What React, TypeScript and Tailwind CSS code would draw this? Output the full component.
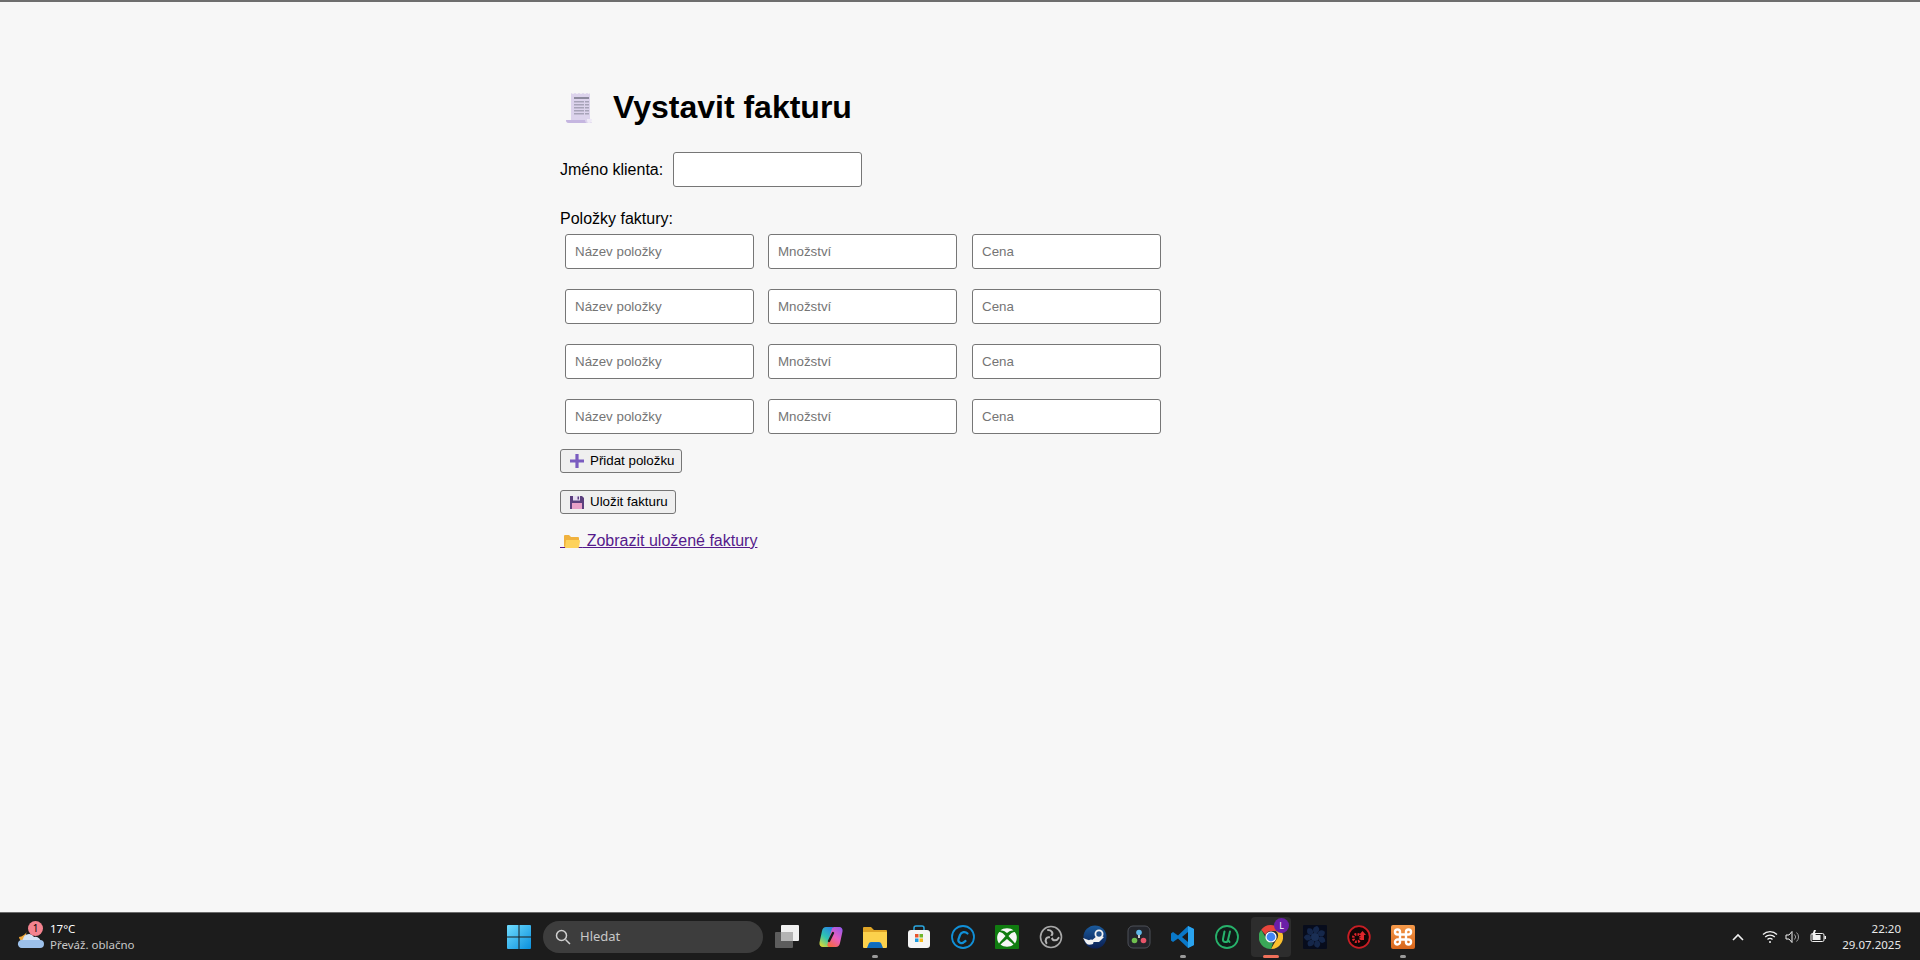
import type { ReactNode } from 'react'

const ReceiptIcon = () => (
  <svg width="32" height="32" viewBox="0 0 32 32" className="shrink-0">
    <path d="M6 1l2 1 2-1 2 1 2-1 2 1 2-1 2 1 2-1 2 1 1-1v25c0 2 1 4 2 5H4c-2 0-3-1-3-3h5z" fill="#dcd3ec" />
    <path d="M1 28h19c0 2 1 3 2 3H4c-2 0-3-1-3-3z" fill="#c5b6e0" />
    <path d="M22 27h5c0 2-1 4-3 4s-2-2-2-4z" fill="#efeaf7" />
    <rect x="9" y="5" width="15" height="2" fill="#8d8a9e" />
    <g fill="#a7a3b8">
      <rect x="9" y="9" width="10" height="1.5" />
      <rect x="20" y="9" width="4" height="1.5" />
      <rect x="9" y="12" width="10" height="1.5" />
      <rect x="20" y="12" width="4" height="1.5" />
      <rect x="9" y="15" width="10" height="1.5" />
      <rect x="20" y="15" width="4" height="1.5" />
      <rect x="9" y="18" width="10" height="1.5" />
      <rect x="20" y="18" width="4" height="1.5" />
      <rect x="9" y="21" width="10" height="1.5" />
      <rect x="20" y="21" width="4" height="1.5" />
    </g>
  </svg>
)

const PlusIcon = () => (
  <svg width="14" height="14" viewBox="0 0 14 14" className="shrink-0">
    <path d="M5.400 0h3.200v5.400H14v3.200H8.600V14H5.400V8.600H0V5.400h5.400z" fill="#7a5cc0" />
  </svg>
)

const SaveIcon = () => (
  <svg width="14" height="14" viewBox="0 0 14 14" className="shrink-0">
    <path d="M0 1h12l2 2v11H0z" fill="#5b3f7e" />
    <rect x="3" y="1" width="7" height="4.500" fill="#e8dff2" />
    <rect x="7.500" y="1.500" width="1.500" height="3" fill="#5b3f7e" />
    <rect x="2" y="8" width="10" height="6" fill="#e8a0c8" />
  </svg>
)

// the emoji sits over non-breaking spaces so the link underline runs under it
const FolderIcon = () => (
  <span className="relative">
    {'\u00a0\u00a0\u00a0\u00a0\u00a0'}
    <svg width="16" height="15" viewBox="0 0 16 15" className="absolute left-[4px] top-[2px]">
      <path d="M0 2a1 1 0 0 1 1-1h4l2 2h7a1 1 0 0 1 1 1v9H1a1 1 0 0 1-1-1z" fill="#f0b23e" />
      <path d="M2 6h13a1 1 0 0 1 1 1l-1 6a1 1 0 0 1-1 1H1z" fill="#fdd25c" />
    </svg>
  </span>
)

const Field = ({ placeholder }: { placeholder: string }) => (
  <input
    placeholder={placeholder}
    className="w-[189px] h-[35px] bg-white border border-[#767676] rounded-[3px] px-[9px] text-[13.33px] placeholder:text-[#757575] outline-none"
  />
)

const Action = ({ icon, children }: { icon: ReactNode; children: ReactNode }) => (
  <button className="h-6 flex items-center gap-[6px] pl-[9px] pr-[7px] bg-[#efefef] border border-[#767676] rounded-[3px] text-[13.33px] text-black">
    {icon}
    {children}
  </button>
)

const WeatherIcon = () => (
  <div className="relative w-[30px] h-[30px]">
    <svg width="30" height="30" viewBox="0 0 30 30">
      <path d="M12 8a9 9 0 0 0 0 11l-6 1c-2-2-3-4-3-5 3 0 7-3 9-7z" fill="#f2a93b" />
      <path d="M7 17a6 6 0 0 1 11-2 5 5 0 0 1 6 7H7a3.500 3.500 0 0 1 0-5z" fill="#d4e4f7" />
      <path d="M2 21a4 4 0 0 1 5-3h17a4 4 0 0 1 0 8H6a4 4 0 0 1-4-5z" fill="#9cc0ea" />
    </svg>
    <span className="absolute left-[12px] top-[-1px] w-[15px] h-[15px] rounded-full bg-[#f4838f] text-[10px] leading-[15px] text-center text-black">1</span>
  </div>
)

const StartIcon = () => (
  <svg width="24" height="24" viewBox="0 0 24 24">
    <defs>
      <linearGradient id="win" x1="0" y1="0" x2="1" y2="1">
        <stop offset="0" stopColor="#6fdcff" />
        <stop offset="1" stopColor="#0a8fdc" />
      </linearGradient>
    </defs>
    <path d="M0 1a1 1 0 0 1 1-1h10.500v11.500H0zM12.500 0H23a1 1 0 0 1 1 1v10.500H12.500zM0 12.500h11.500V24H1a1 1 0 0 1-1-1zM12.500 12.500H24V23a1 1 0 0 1-1 1H12.500z" fill="url(#win)" />
  </svg>
)

const TaskViewIcon = () => (
  <svg width="24" height="24" viewBox="0 0 24 24">
    <rect x="0" y="7" width="18" height="16" rx="1" fill="#5d5d5d" />
    <rect x="6" y="0" width="18" height="16" rx="1" fill="#f0f0f0" />
    <rect x="6" y="7" width="12" height="9" fill="#b4b4b4" />
  </svg>
)

const CopilotIcon = () => (
  <svg width="24" height="24" viewBox="0 0 24 24">
    <defs>
      <linearGradient id="copL" x1="0.800" y1="0" x2="0.200" y2="1">
        <stop offset="0" stopColor="#2a7fe8" />
        <stop offset="0.550" stopColor="#2ec4b0" />
        <stop offset="1" stopColor="#d8d838" />
      </linearGradient>
      <linearGradient id="copR" x1="0.800" y1="0" x2="0.200" y2="1">
        <stop offset="0" stopColor="#9a5ae8" />
        <stop offset="0.500" stopColor="#ea5fc0" />
        <stop offset="1" stopColor="#f5693b" />
      </linearGradient>
    </defs>
    <path d="M7 2h6c1.500 0 2.500.8 2.800 1.800L11 20.500C10.500 21.500 9.500 22 8 22H4c-2.500 0-4-2-3.500-4.500L3 6c.5-2.500 2-4 4-4z" fill="url(#copL)" />
    <path d="M17 22h-6c-1.500 0-2.500-.8-2.800-1.800L13 3.500C13.500 2.500 14.500 2 16 2h4c2.500 0 4 2 3.500 4.500L21 18c-.5 2.500-2 4-4 4z" fill="url(#copR)" />
    <path d="M14 8l-4 8" stroke="#1c1c1c" strokeWidth="2.400" strokeLinecap="round" />
  </svg>
)

const ExplorerIcon = () => (
  <svg width="24" height="24" viewBox="0 0 24 24">
    <path d="M0 3a1 1 0 0 1 1-1h7l3 3h12a1 1 0 0 1 1 1v3H0z" fill="#e0a526" />
    <path d="M0 7h24v15a1 1 0 0 1-1 1H1a1 1 0 0 1-1-1z" fill="#fcd14c" />
    <path d="M6 19a2 2 0 0 1 2-2h8a2 2 0 0 1 2 2v4H6z" fill="#1473c9" />
    <path d="M4 23l2-5h12l2 5z" fill="#0f6cbd" />
  </svg>
)

const StoreIcon = () => (
  <svg width="24" height="24" viewBox="0 0 24 24">
    <path d="M7 6V3a2 2 0 0 1 2-2h6a2 2 0 0 1 2 2v3" fill="none" stroke="#2aa7e0" strokeWidth="1.500" />
    <rect x="1" y="5" width="22" height="18" rx="3" fill="#f5f5f5" />
    <rect x="8" y="9" width="3.500" height="3.500" fill="#e8552c" />
    <rect x="12.500" y="9" width="3.500" height="3.500" fill="#6fb52c" />
    <rect x="8" y="13.500" width="3.500" height="3.500" fill="#1c9be0" />
    <rect x="12.500" y="13.500" width="3.500" height="3.500" fill="#f5b81c" />
  </svg>
)

const CCleanerIcon = () => (
  <svg width="24" height="24" viewBox="0 0 24 24">
    <circle cx="12" cy="12" r="11" fill="none" stroke="#1190d8" strokeWidth="1.800" />
    <path d="M16.500 8.500A4.500 4.500 0 0 0 9 10l-1.500 4a3.200 3.200 0 0 0 5.500 3l1.500-1" fill="none" stroke="#1190d8" strokeWidth="2.200" strokeLinecap="round" />
  </svg>
)

const XboxIcon = () => (
  <svg width="24" height="24" viewBox="0 0 24 24">
    <rect width="24" height="24" rx="1" fill="#107c10" />
    <g fill="#f6f6f6">
      <path d="M5.500 5.500C8 2.500 16 2.500 18.500 5.500C16 5 13.500 6.500 12 8C10.500 6.500 8 5 5.500 5.500z" />
      <path d="M4.300 7C6 6.500 9 9 10.500 11C8 14 5 17 4 18.500C1.500 15 1.500 10 4.300 7z" />
      <path d="M19.700 7C18 6.500 15 9 13.500 11C16 14 19 17 20 18.500C22.500 15 22.500 10 19.700 7z" />
      <path d="M12 14C14.500 16 18 19 18.500 19.500C15 22.500 9 22.500 5.500 19.500C6 19 9.500 16 12 14z" />
    </g>
  </svg>
)

const ObsIcon = () => (
  <svg width="24" height="24" viewBox="0 0 24 24">
    <circle cx="12" cy="12" r="10.500" fill="#1f1f1f" stroke="#a8a8a8" strokeWidth="1.600" />
    {[0, 120, 240].map((angle) => (
      <g key={angle} transform={`rotate(${angle} 12 12)`}>
        <path d="M12.500 10.500C14.500 8.500 13 5 9 5" fill="none" stroke="#b4b4b4" strokeWidth="2" strokeLinecap="round" />
      </g>
    ))}
    <circle cx="12" cy="12" r="1.200" fill="#1f1f1f" />
  </svg>
)

const SteamIcon = () => (
  <svg width="24" height="24" viewBox="0 0 24 24">
    <defs>
      <linearGradient id="steam" x1="0" y1="0" x2="0" y2="1">
        <stop offset="0" stopColor="#1a5a9c" />
        <stop offset="1" stopColor="#0b1f52" />
      </linearGradient>
    </defs>
    <circle cx="12" cy="12" r="11.500" fill="url(#steam)" />
    <path d="M0 13l8 3 6-5 1-1 6 2-5 5-6 0a4 4 0 0 1-7 1z" fill="#f2f2f2" />
    <circle cx="16" cy="9" r="4.500" fill="#f2f2f2" />
    <circle cx="16" cy="9" r="2.700" fill="#1f4f8a" />
    <circle cx="8" cy="17" r="2.500" fill="#f2f2f2" />
  </svg>
)

const ResolveIcon = () => (
  <svg width="24" height="24" viewBox="0 0 24 24">
    <rect x="1" y="1" width="22" height="22" rx="5" fill="#23252b" stroke="#4d5058" strokeWidth="1" />
    <circle cx="12" cy="7.500" r="2.800" fill="#5fb7e8" />
    <circle cx="7.500" cy="15.500" r="2.800" fill="#6fc04f" />
    <circle cx="16.500" cy="15.500" r="2.800" fill="#e8556a" />
    <path d="M12 10v3" stroke="#c8c8c8" strokeWidth="2" />
  </svg>
)

const VsCodeIcon = () => (
  <svg width="24" height="24" viewBox="0 0 24 24">
    <path d="M17 1l6 3v16l-6 3-10-9.500L2 17l-2-1.500v-7L2 7l5 3.500z" fill="#0a78c8" />
    <path d="M17 1l6 3v16l-6 3z" fill="#2aa3ee" />
    <path d="M17 7l-6 5 6 5z" fill="#1c1c1c" />
  </svg>
)

const IdmIcon = () => (
  <svg width="24" height="24" viewBox="0 0 24 24">
    <circle cx="12" cy="12" r="11" fill="#101c18" stroke="#27b26b" strokeWidth="1.800" />
    <path d="M9.500 6.500L8 14a2.500 2.500 0 0 0 5 1l2-8.500M13.500 15.500l1 1.500" fill="none" stroke="#27b26b" strokeWidth="2" strokeLinecap="round" />
  </svg>
)

const ChromeIcon = () => (
  <svg width="24" height="24" viewBox="0 0 24 24">
    <path d="M12 0a12 12 0 0 1 10.400 6H12a6 6 0 0 0-5.600 3.800L2.200 4.700A12 12 0 0 1 12 0z" fill="#e8453c" />
    <path d="M22.400 6A12 12 0 0 1 12 24l5.200-9A6 6 0 0 0 17 6z" fill="#fbc02d" />
    <path d="M2.200 4.700L7 13a6 6 0 0 0 7 4.800L12 24A12 12 0 0 1 2.200 4.700z" fill="#3aa757" />
    <circle cx="12" cy="12" r="5.600" fill="#fff" />
    <circle cx="12" cy="12" r="4.400" fill="#4285f4" />
  </svg>
)

const FanIcon = () => (
  <svg width="24" height="24" viewBox="0 0 24 24">
    <rect width="24" height="24" rx="1" fill="#070c1c" />
    {[0, 51, 103, 154, 206, 257, 309].map((angle) => (
      <path key={angle} transform={`rotate(${angle} 12 12)`} d="M11 8c-2-3-1-6 3-7 3 2 3 5 0 7z" fill="#15274a" />
    ))}
    <circle cx="12" cy="12" r="4" fill="#1a2f55" />
  </svg>
)

const RedIcon = () => (
  <svg width="24" height="24" viewBox="0 0 24 24">
    <circle cx="12" cy="12" r="10.800" fill="#120505" stroke="#c81e24" strokeWidth="1.800" />
    <circle cx="10" cy="13" r="3.800" fill="none" stroke="#e0262c" strokeWidth="2.600" strokeDasharray="1.800 1.200" />
    <path d="M15.500 6l3.500 4h-2v5h-3v-5h-2z" fill="#e0262c" />
  </svg>
)

const XamppIcon = () => (
  <svg width="24" height="24" viewBox="0 0 24 24">
    <defs>
      <linearGradient id="xampp" x1="0" y1="0" x2="0" y2="1">
        <stop offset="0" stopColor="#f59a4a" />
        <stop offset="1" stopColor="#d8651a" />
      </linearGradient>
    </defs>
    <rect width="24" height="24" rx="2" fill="url(#xampp)" />
    <path d="M9 9V7a2.500 2.500 0 1 0-2.500 2.500H17.500a2.500 2.500 0 1 0-2.500-2.500V17a2.500 2.500 0 1 0 2.500-2.500H6.500a2.500 2.500 0 1 0 2.500 2.500z" fill="none" stroke="#fff" strokeWidth="2.400" />
  </svg>
)

const TaskbarItem = ({ children, running, active }: { children: ReactNode; running?: boolean; active?: boolean }) => (
  <div className="relative w-[44px] h-[48px] flex items-center justify-center">
    {active && <div className="absolute left-[2px] top-[4px] w-[40px] h-[40px] rounded-[4px] bg-[#2d2d2d]" />}
    <div className="relative flex">{children}</div>
    {running && <div className="absolute bottom-[3px] left-[19px] w-[6px] h-[3px] rounded-full bg-[#9a9a9a]" />}
    {active && <div className="absolute bottom-[3px] left-[14px] w-[16px] h-[3px] rounded-full bg-[#f0705a]" />}
  </div>
)

export default function App() {
  return (
    <div className="h-screen flex flex-col bg-[#f7f7f7] font-['Liberation_Sans',Arial,sans-serif] text-black overflow-hidden">
      <main className="flex-1 border-t-2 border-[#6e6e6e] pl-[560px]">
        <div className="flex items-center gap-[16px] mt-[87px] pl-[5px]">
          <ReceiptIcon />
          <h1 className="text-[32px] font-bold leading-[37px]">Vystavit fakturu</h1>
        </div>

        <div className="flex items-center gap-[10px] mt-[26px]">
          <label>Jméno klienta:</label>
          <input className="w-[189px] h-[35px] bg-white border border-[#767676] rounded-[3px] outline-none" />
        </div>

        <p className="mt-[23px] leading-[18px]">Položky faktury:</p>

        <div className="flex flex-col gap-5 mt-[6px] ml-[5px]">
          {[0, 1, 2, 3].map((row) => (
            <div key={row} className="flex gap-[14px]">
              <Field placeholder="Název položky" />
              <Field placeholder="Množství" />
              <div className="ml-px">
                <Field placeholder="Cena" />
              </div>
            </div>
          ))}
        </div>

        <div className="flex flex-col items-start gap-[17px] mt-[15px]">
          <Action icon={<PlusIcon />}>Přidat položku</Action>
          <Action icon={<SaveIcon />}>Uložit fakturu</Action>
        </div>

        <a href="#" className="block w-fit mt-[15px] text-[#551a8b] underline">
          <FolderIcon /> Zobrazit uložené faktury
        </a>
      </main>

      <footer className="h-[48px] shrink-0 flex items-center bg-[#1c1c1c] border-t border-[#6a6a6a] text-white font-['Noto_Sans',sans-serif]">
        <div className="w-[496px] flex items-center gap-[4px] pl-[16px]">
          <WeatherIcon />
          <div className="text-[11.5px] leading-[16px]">
            <div>17°C</div>
            <div className="text-[#c8c8c8]">Převáž. oblačno</div>
          </div>
        </div>

        <div className="ml-px -mr-px flex">
          <TaskbarItem>
            <StartIcon />
          </TaskbarItem>
        </div>
        <div className="w-[220px] h-[32px] ml-[3px] mr-[2px] flex items-center gap-[9px] pl-[12px] rounded-full bg-[#3d3d3d] text-[13px] text-[#c8c8c8]">
          <svg width="16" height="16" viewBox="0 0 16 16" fill="none" stroke="#d0d0d0" strokeWidth="1.500">
            <circle cx="6.500" cy="6.500" r="5" />
            <path d="M10.500 10.500L15 15" />
          </svg>
          Hledat
        </div>
        <TaskbarItem><TaskViewIcon /></TaskbarItem>
        <TaskbarItem><CopilotIcon /></TaskbarItem>
        <TaskbarItem running><ExplorerIcon /></TaskbarItem>
        <TaskbarItem><StoreIcon /></TaskbarItem>
        <TaskbarItem><CCleanerIcon /></TaskbarItem>
        <TaskbarItem><XboxIcon /></TaskbarItem>
        <TaskbarItem><ObsIcon /></TaskbarItem>
        <TaskbarItem><SteamIcon /></TaskbarItem>
        <TaskbarItem><ResolveIcon /></TaskbarItem>
        <TaskbarItem running><VsCodeIcon /></TaskbarItem>
        <TaskbarItem><IdmIcon /></TaskbarItem>
        <TaskbarItem active>
          <ChromeIcon />
          <span className="absolute right-[-6px] top-[-7px] w-[15px] h-[15px] rounded-full bg-[#6a1fa8] text-[9px] leading-[15px] text-center text-white">L</span>
        </TaskbarItem>
        <TaskbarItem><FanIcon /></TaskbarItem>
        <TaskbarItem><RedIcon /></TaskbarItem>
        <TaskbarItem running><XamppIcon /></TaskbarItem>

        <div className="flex-1 flex items-center justify-end pr-[19px]">
          <svg width="12" height="8" viewBox="0 0 12 8" fill="none" stroke="#f0f0f0" strokeWidth="1.600" className="mr-[18px]">
            <path d="M1 7l5-5 5 5" />
          </svg>
          <svg width="16" height="14" viewBox="0 0 16 14" fill="none" stroke="#f0f0f0" strokeWidth="1.300" className="mr-[7px]">
            <path d="M1 4.500a10 10 0 0 1 14 0M3.200 7a7 7 0 0 1 9.600 0M5.500 9.500a3.500 3.500 0 0 1 5 0" />
            <circle cx="8" cy="12" r="1" fill="#f0f0f0" stroke="none" />
          </svg>
          <svg width="16" height="14" viewBox="0 0 16 14" fill="none" stroke="#f0f0f0" strokeWidth="1" className="mr-[9px]">
            <path d="M1 5h3l3-3.500v11L4 9H1z" />
            <path d="M9.500 4.500a3.500 3.500 0 0 1 0 5M11.500 2.500a6 6 0 0 1 0 9" stroke="#a0a0a0" />
          </svg>
          <svg width="17" height="14" viewBox="0 0 17 14" className="mr-[15px]">
            <rect x="1" y="3.500" width="13" height="8" rx="1.500" fill="none" stroke="#f0f0f0" />
            <rect x="2.500" y="5" width="8" height="5" fill="#f0f0f0" />
            <rect x="14.500" y="6" width="1.500" height="3" fill="#f0f0f0" />
            <path d="M4 0L2 5h2l-1 3 3-4H4.500L6 0z" fill="#f0f0f0" />
          </svg>
          <div className="text-[11.5px] leading-[16px] text-right text-[#e8e8e8]">
            <div>22:20</div>
            <div>29.07.2025</div>
          </div>
        </div>
      </footer>
    </div>
  )
}
